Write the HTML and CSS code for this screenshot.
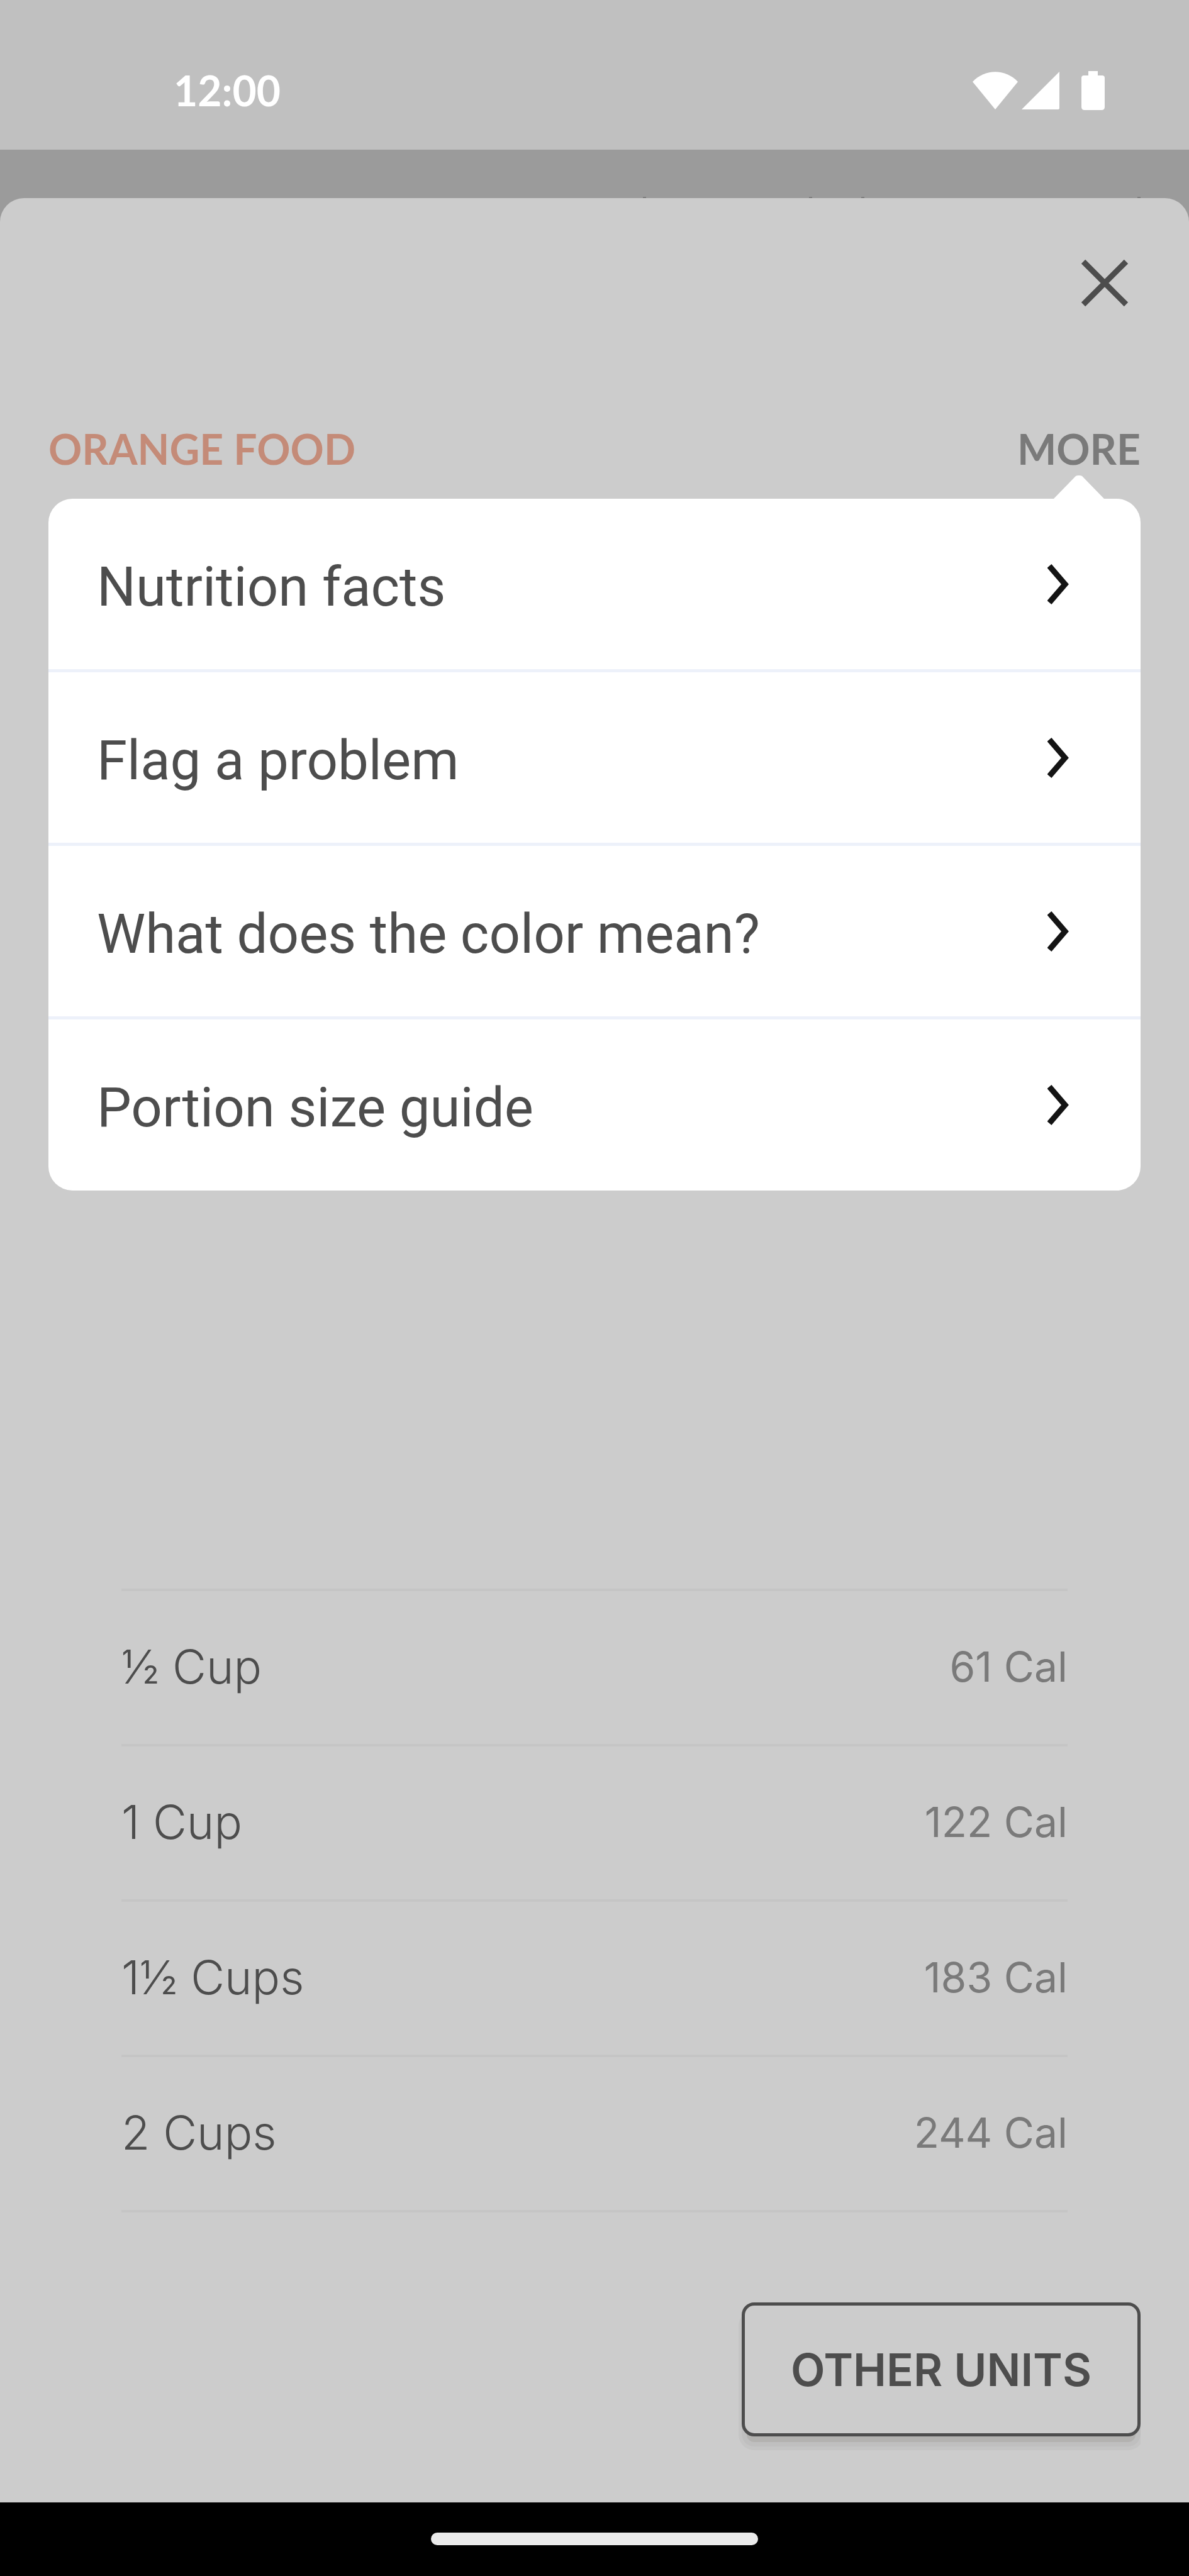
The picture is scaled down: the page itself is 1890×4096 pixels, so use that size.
FILE: index.html
```html
<!DOCTYPE html>
<html lang="en">
<head>
<meta charset="utf-8">
<meta name="viewport" content="width=device-width, initial-scale=1">
<title>Portion sizes</title>
<link rel="stylesheet" href="styles.css">
</head>
<body>
<div class="screen">
  <header class="status">
    <time class="clock">12:00</time>
    <div class="status-icons">
      <svg class="wifi" viewBox="0 0 72 60" aria-hidden="true"><path d="M0 16C20-5 52-5 72 16L36 60Z"/></svg>
      <svg class="signal" viewBox="0 0 60 60" aria-hidden="true"><path d="M60 0V58Q60 60 58 60H0Z"/></svg>
      <svg class="battery" viewBox="0 0 37 62" aria-hidden="true"><path d="M11 0H26V7H33Q37 7 37 11V57Q37 62 32 62H5Q0 62 0 57V11Q0 7 4 7H11Z"/></svg>
    </div>
  </header>
  <main class="sheet">
    <span class="tick tick-a"></span>
    <span class="tick tick-b"></span>
    <span class="tick tick-c"></span>
    <span class="tick tick-d"></span>
    <button class="close" type="button" aria-label="Close">
      <svg viewBox="0 0 96 96" aria-hidden="true"><path d="M14 14L82 82M82 14L14 82"/></svg>
    </button>
    <div class="heading">
      <h1 class="category">ORANGE FOOD</h1>
      <button class="more" type="button">MORE</button>
    </div>
    <nav class="menu">
      <svg class="notch" viewBox="0 0 80 37" aria-hidden="true"><path d="M0 37L33 3Q35 0 39 0H41Q45 0 47 3L80 37Z"/></svg>
      <a class="item" href="#nutrition"><span class="label">Nutrition facts</span><svg class="chevron" viewBox="0 0 34 66" aria-hidden="true"><path d="M3 4L28 33L3 62"/></svg></a>
      <a class="item" href="#flag"><span class="label">Flag a problem</span><svg class="chevron" viewBox="0 0 34 66" aria-hidden="true"><path d="M3 4L28 33L3 62"/></svg></a>
      <a class="item" href="#color"><span class="label">What does the color mean?</span><svg class="chevron" viewBox="0 0 34 66" aria-hidden="true"><path d="M3 4L28 33L3 62"/></svg></a>
      <a class="item" href="#portion"><span class="label">Portion size guide</span><svg class="chevron" viewBox="0 0 34 66" aria-hidden="true"><path d="M3 4L28 33L3 62"/></svg></a>
    </nav>
    <div class="portions">
      <table class="table">
        <tbody>
          <tr><th scope="row">½ Cup</th><td>61 Cal</td></tr>
          <tr><th scope="row">1 Cup</th><td>122 Cal</td></tr>
          <tr><th scope="row">1½ Cups</th><td>183 Cal</td></tr>
          <tr><th scope="row">2 Cups</th><td>244 Cal</td></tr>
        </tbody>
      </table>
    </div>
    <button class="units" type="button">OTHER UNITS</button>
  </main>
  <footer class="navbar"><div class="pill"></div></footer>
</div>
</body>
</html>
```

FILE: styles.css
```css
* {
  box-sizing: border-box;
}

body {
  margin: 0;
  background: #9b9b9b;
  color: #4d4d4d;
  font-family: Inter, "Liberation Sans", sans-serif;
}

button {
  margin: 0;
  padding: 0;
  border: 0;
  background: none;
  color: inherit;
  font: inherit;
  cursor: pointer;
}

svg {
  display: block;
}

.screen {
  display: flex;
  flex-direction: column;
  min-height: 100vh;
}

.status {
  display: flex;
  align-items: center;
  justify-content: space-between;
  height: 238px;
  padding: 50px 134px 0 276px;
  background: #c0c0c0;
  color: #fff;
}

.clock {
  font: 700 66px/78px Lato, sans-serif;
}

.status-icons {
  display: flex;
  align-items: center;
  fill: #fff;
}

.wifi {
  width: 72px;
  height: 60px;
}

.signal {
  width: 60px;
  height: 60px;
  margin-left: 6px;
}

.battery {
  width: 37px;
  height: 62px;
  margin-left: 35px;
}

.sheet {
  position: relative;
  display: flex;
  flex: 1;
  flex-direction: column;
  margin-top: 77px;
  padding: 87px 77px 105px;
  border-radius: 38px 38px 0 0;
  background: #ccc;
}

/* tops of the letters on the page behind the sheet */
.tick {
  position: absolute;
  top: -2px;
  width: 5px;
  height: 2px;
  background: #7c7c7c;
}

.tick-a {
  right: 863px;
}

.tick-b {
  right: 599px;
}

.tick-c {
  right: 516px;
}

.tick-d {
  right: 77px;
}

.close {
  align-self: flex-end;
  width: 96px;
  height: 96px;
  margin-right: 9px;
}

.close svg {
  fill: none;
  stroke: #4d4d4d;
  stroke-width: 9px;
}

.heading {
  display: flex;
  justify-content: space-between;
  margin-top: 177px;
  font: 700 66px/78px Lato, sans-serif;
}

.category {
  margin: 0;
  color: #c48b78;
  font: inherit;
}

.more {
  color: #7a7a7a;
}

.menu {
  position: relative;
  margin-top: 40px;
  border-radius: 38px;
  background: #fff;
}

.notch {
  position: absolute;
  right: 58px;
  bottom: 100%;
  width: 80px;
  height: 37px;
  fill: #fff;
}

.item {
  display: flex;
  align-items: center;
  justify-content: space-between;
  height: 276px;
  padding: 0 114px 0 77px;
  border-bottom: 5px solid #edf1fa;
  color: #4d4d4d;
  font: 400 87px/106px Roboto, sans-serif;
  text-decoration: none;
}

.item:last-child {
  height: 272px;
  border-bottom: 0;
}

.label {
  padding-top: 8px;
}

.chevron {
  width: 34px;
  height: 66px;
  fill: none;
  stroke: #141414;
  stroke-width: 9px;
}

.portions {
  margin: 633px 116px 0;
}

.table {
  width: 100%;
  border-spacing: 0;
  border-top: 4px solid #c5c5c5;
}

.table th,
.table td {
  height: 247px;
  padding: 0 0 4px;
  border-bottom: 4px solid #c5c5c5;
  font-weight: 300;
  line-height: 90px;
}

.table th {
  font-size: 74px;
  text-align: left;
}

.table td {
  color: #7a7a7a;
  font-size: 66px;
  font-weight: 400;
  text-align: right;
}

.units {
  align-self: flex-end;
  min-width: 634px;
  height: 213px;
  margin-top: 143px;
  padding: 0 72px;
  border: 5px solid #4d4d4d;
  border-radius: 20px;
  background: #ccc;
  box-shadow: 0 17px 0 -8px #b3b2b0, 0 16px 0 0 #bfbfbf, 0 17px 0 5px #c5c5c5;
  clip-path: inset(0 0 -30px -10px);
  font-size: 71px;
  font-weight: 600;
}

.navbar {
  display: flex;
  align-items: center;
  justify-content: center;
  height: 117px;
  background: #000;
}

.pill {
  width: 520px;
  height: 20px;
  margin-bottom: 1px;
  border-radius: 10px;
  background: #eaeaea;
}
```
